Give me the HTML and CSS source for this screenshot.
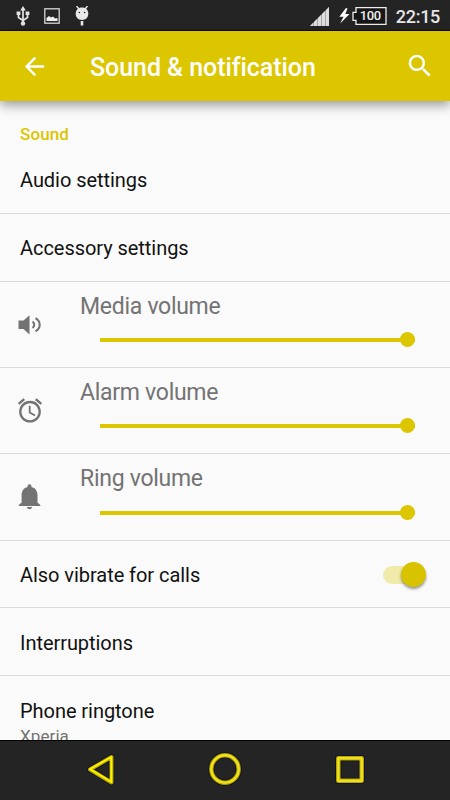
FILE: index.html
```html
<!DOCTYPE html>
<html lang="en">
<head>
    <meta charset="UTF-8">
    <meta name="viewport" content="width=device-width, initial-scale=1.0">
    <title>Sound &amp; notification</title>
    <link rel="stylesheet" href="styles.css">
</head>
<body>
    <div class="screen">
        <!-- Status bar -->
        <div class="status-bar">
            <div class="status-left">
                <svg width="14" height="20" viewBox="0 0 14 20" fill="none" stroke="#e4e4e4" stroke-width="1.7">
                    <path d="M7 4v13M2.500 7v4.500L7 14.500l4.500-3V7"/>
                    <path d="M7 0l2.800 4.500H4.200zM.6 5.500h3.800v3.500H.6zM9.600 5.500h3.800v3.500H9.600z" fill="#e4e4e4" stroke="none"/>
                    <circle cx="7" cy="17.500" r="2.200" fill="#e4e4e4" stroke="none"/>
                </svg>
                <svg class="picture" width="16" height="16" viewBox="0 0 16 16">
                    <rect x=".8" y=".8" width="14.400" height="14.400" fill="none" stroke="#d8d8d8" stroke-width="1.300"/>
                    <path d="M2.500 13V10l2.500-2 2 1.500 2-1 2 2 2.500-.5v3z" fill="#f0f0f0"/>
                </svg>
                <svg class="droid" width="14" height="20" viewBox="0 0 14 20">
                    <path d="M1.500 0L4 3M12.500 0L10 3" stroke="#e8e8e8" stroke-width="1.400"/>
                    <path d="M7 1.500c4 0 6.300 2.700 6.300 6.300 0 3.600-2.500 6.200-6.300 6.200S.7 11.400.7 7.800C.7 4.200 3 1.500 7 1.500z" fill="#e8e8e8"/>
                    <circle cx="4.300" cy="6.500" r=".8" fill="#242424"/>
                    <circle cx="9.700" cy="6.500" r=".8" fill="#242424"/>
                    <path d="M7 15v4.500" stroke="#e8e8e8" stroke-width="2.600"/>
                </svg>
            </div>
            <div class="status-right">
                <svg width="20" height="20" viewBox="0 0 20 20">
                    <path d="M0 19L19 0v19z" fill="#a8a8a8"/>
                    <path d="M0 19h3v-3zM4 19h3v-7l-3 3zM8 19h3V8l-3 3zM12 19h3V4l-3 3zM16 19h3V0l-3 3z" fill="#dedede"/>
                </svg>
                <svg class="bolt" width="11" height="16" viewBox="0 0 11 16">
                    <path d="M7 0L.3 8.700h4.200L1.200 15.500 10.500 6H6.300L8.500.5z" fill="#fff"/>
                </svg>
                <div class="battery">
                    <svg width="35" height="18" viewBox="0 0 35 18" fill="#161616" stroke="#eee" stroke-width="1.300">
                        <path d="M4 .7h30v16.600H4v-4H1v-8h3z"/>
                    </svg>
                    <span class="battery-level">100</span>
                </div>
                <span class="clock">22:15</span>
            </div>
        </div>

        <!-- Title bar -->
        <div class="app-bar">
            <svg width="29" height="29" viewBox="0 0 24 24" fill="#fff">
                <path d="M20 11H7.830l5.590-5.590L12 4l-8 8 8 8 1.410-1.410L7.830 13H20v-2z"/>
            </svg>
            <h1>Sound &amp; notification</h1>
            <svg width="30" height="30" viewBox="0 0 24 24" fill="#fff">
                <path d="M15.500 14h-.79l-.28-.27C15.410 12.590 16 11.110 16 9.500 16 5.910 13.090 3 9.500 3S3 5.910 3 9.500 5.910 16 9.500 16c1.610 0 3.090-.59 4.230-1.570l.27.28v.79l5 4.990L20.490 19l-4.990-5zm-6 0C7.010 14 5 11.990 5 9.500S7.010 5 9.500 5 14 7.010 14 9.500 11.990 14 9.500 14z"/>
            </svg>
        </div>

        <!-- Settings list -->
        <div class="content">
            <h2>Sound</h2>
            <div class="row"><span>Audio settings</span></div>
            <div class="row"><span>Accessory settings</span></div>

            <div class="volume">
                <svg class="icon" width="24" height="20" viewBox="0 0 24 20" fill="#737373">
                    <path d="M.5 5.500h5L11.500.2v19.300l-6-5.500h-5z"/>
                    <path d="M14.500 6.700c2.300 1.500 2.300 4.700 0 6.200M17.500 3.300c5.600 3 5.600 10 0 13" fill="none" stroke="#737373" stroke-width="2.100"/>
                </svg>
                <div class="control">
                    <div class="label">Media volume</div>
                    <div class="slider"><div class="thumb"></div></div>
                </div>
            </div>
            <div class="volume">
                <svg class="icon" width="29" height="29" viewBox="0 0 24 24" fill="#737373">
                    <path d="M22 5.720l-4.600-3.860-1.290 1.530 4.600 3.860L22 5.720zM7.880 3.390L6.600 1.860 2 5.710l1.290 1.530 4.590-3.850zM12.500 8H11v6l4.750 2.850.75-1.230-4-2.370V8zM12 4c-4.970 0-9 4.030-9 9s4.020 9 9 9c4.970 0 9-4.030 9-9s-4.030-9-9-9zm0 16c-3.870 0-7-3.130-7-7s3.130-7 7-7 7 3.130 7 7-3.130 7-7 7z"/>
                </svg>
                <div class="control">
                    <div class="label">Alarm volume</div>
                    <div class="slider"><div class="thumb"></div></div>
                </div>
            </div>
            <div class="volume ring-row">
                <svg class="icon" width="24" height="26" viewBox="0 0 24 26" fill="#737373">
                    <path d="M11.500.3c1.200 0 1.900.7 1.900 1.900v.8c3.900.9 6.100 4 6.100 8v7.500l2.800 2.500v1H.8v-1l2.800-2.500V11c0-4 2.200-7.100 6-8v-.8c0-1.200.7-1.900 1.900-1.900zM9 23h5c0 1.300-1.100 2.200-2.500 2.200S9 24.300 9 23z"/>
                </svg>
                <div class="control">
                    <div class="label">Ring volume</div>
                    <div class="slider"><div class="thumb"></div></div>
                </div>
            </div>

            <div class="row vibrate-row">
                <span>Also vibrate for calls</span>
                <div class="switch">
                    <div class="track"></div>
                    <div class="knob"></div>
                </div>
            </div>
            <div class="row interruptions-row"><span>Interruptions</span></div>
            <div class="row ringtone-row">
                <span>Phone ringtone</span>
                <span class="summary">Xperia</span>
            </div>
        </div>

        <!-- Navigation bar -->
        <div class="nav-bar">
            <svg width="34" height="36" viewBox="0 0 34 36" fill="none" stroke-linejoin="round">
                <path d="M7 18.500L28.500 6v25.500z" stroke="#0d0d26" stroke-width="5.500"/>
                <path d="M7 18.500L28.500 6v25.500z" stroke="#b3a600" stroke-width="4"/>
                <path d="M7 18.200L28.300 6v25z" stroke="#fff200" stroke-width="2"/>
            </svg>
            <svg width="36" height="36" viewBox="0 0 36 36" fill="none">
                <circle cx="18" cy="18" r="13.700" stroke="#0d0d26" stroke-width="6"/>
                <circle cx="18" cy="18" r="13.700" stroke="#a89c00" stroke-width="4.500"/>
                <circle cx="18" cy="18" r="13.700" stroke="#f2e21c" stroke-width="2.400"/>
            </svg>
            <svg width="34" height="36" viewBox="0 0 34 36" fill="none" stroke-linejoin="round">
                <rect x="5.300" y="7.300" width="23.400" height="22.400" stroke="#0d0d26" stroke-width="6"/>
                <rect x="5.300" y="7.300" width="23.400" height="22.400" stroke="#b8aa00" stroke-width="4.500"/>
                <rect x="5.300" y="7.300" width="23.400" height="22.400" stroke="#efdf20" stroke-width="2.400"/>
            </svg>
        </div>
    </div>
</body>
</html>
```
FILE: styles.css
```css
* {
    box-sizing: border-box;
}
body {
    margin: 0;
    font-family: Roboto, sans-serif;
    background-color: #fafafa;
}
svg {
    display: block;
    flex-shrink: 0;
}
.screen {
    width: 450px;
    height: 800px;
    display: flex;
    flex-direction: column;
    overflow: hidden;
}

/* Status bar */
.status-bar {
    height: 31px;
    flex-shrink: 0;
    background-color: #242424;
    border-bottom: 1px solid #0c0a20;
    display: flex;
    justify-content: space-between;
    padding: 0 10px 0 16px;
}
.status-left,
.status-right {
    display: flex;
    align-items: flex-start;
    padding-top: 6px;
}
.picture {
    margin: 2px 0 0 14px;
}
.droid {
    margin-left: 15px;
}
.status-right {
    padding-top: 7px;
}
.bolt {
    margin: 1px 2px 0 9px;
}
.battery {
    position: relative;
}
.battery-level {
    position: absolute;
    left: 8px;
    top: 2px;
    font-size: 13px;
    line-height: 14px;
    font-weight: 500;
    letter-spacing: -0.4px;
    color: #eee;
}
.clock {
    margin-left: 9px;
    font-size: 18px;
    line-height: 20px;
    font-weight: 500;
    letter-spacing: -0.3px;
    color: #e6e6e6;
}

/* Title bar */
.app-bar {
    height: 70px;
    flex-shrink: 0;
    background-color: #dcc600;
    box-shadow: 0 4px 11px rgba(0, 0, 0, 0.4);
    display: flex;
    align-items: center;
    padding: 0 15px 0 20px;
    z-index: 1;
}
.app-bar h1 {
    flex: 1;
    margin: 3px 0 0 41px;
    font-size: 25px;
    line-height: 30px;
    font-weight: 500;
    letter-spacing: -0.06px;
    color: #fff;
}

/* Settings list */
.content {
    flex: 1;
    min-height: 0;
    overflow: hidden;
}
.content h2 {
    height: 45px;
    margin: 0;
    padding: 22px 20px 0;
    font-size: 17px;
    line-height: 22px;
    font-weight: 500;
    letter-spacing: 0.1px;
    color: #dcc600;
}
.row {
    height: 68px;
    padding: 0 20px;
    border-bottom: 1px solid #dadada;
    display: flex;
    align-items: center;
    justify-content: space-between;
    font-size: 20px;
    letter-spacing: -0.05px;
    color: #111;
}
.vibrate-row {
    height: 67px;
    padding: 1px 24px 0 20px;
}
.interruptions-row {
    padding-top: 2px;
}
.ringtone-row {
    height: 90px;
    flex-direction: column;
    align-items: flex-start;
    justify-content: flex-start;
    padding-top: 23px;
    line-height: 24px;
}
.summary {
    margin-top: 1px;
    font-size: 17px;
    letter-spacing: 0.1px;
    color: #737373;
}

.volume {
    height: 86px;
    display: flex;
    border-bottom: 1px solid #dadada;
}
.ring-row {
    height: 87px;
}
.icon {
    width: 60px;
    align-self: center;
}
.control {
    flex: 1;
    padding: 11px 35px 0 20px;
}
.label {
    font-size: 23px;
    line-height: 28px;
    letter-spacing: -0.28px;
    color: #737373;
}
.slider {
    height: 15px;
    margin: 11px 0 0 20px;
    display: flex;
    align-items: center;
    justify-content: flex-end;
    background: linear-gradient(#dcc600, #dcc600) center / 100% 4px no-repeat;
}
.ring-row .slider {
    margin-top: 12px;
}
.thumb {
    width: 15px;
    height: 15px;
    border-radius: 50%;
    background-color: #dcc600;
}

.switch {
    display: flex;
    align-items: center;
}
.track {
    width: 30px;
    height: 18px;
    border-radius: 9px 0 0 9px;
    background-color: #f1ebab;
}
.knob {
    width: 25px;
    height: 25px;
    margin-left: -12px;
    border-radius: 50%;
    background-color: #d8c300;
    box-shadow: 0 2px 3px rgba(0, 0, 0, 0.4);
}

/* Navigation bar */
.nav-bar {
    height: 60px;
    flex-shrink: 0;
    background-color: #242424;
    border-top: 1px solid #000;
    display: flex;
    justify-content: center;
    gap: 90px;
    padding-top: 10px;
}
```
